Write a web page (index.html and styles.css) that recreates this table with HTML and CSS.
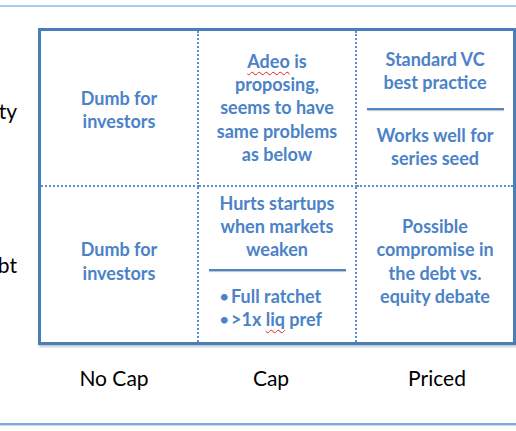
FILE: index.html
```html
<!DOCTYPE html>
<html>
<head>
<meta charset="utf-8">
<link rel="stylesheet" href="styles.css">
</head>
<body>
<div class="slide">
  <div class="topline"></div>
  <div class="main">
    <div class="rowlabels">
      <div class="rowlabel rl1"><span>Equity</span></div>
      <div class="rowlabel rl2"><span>Debt</span></div>
    </div>
    <div class="matrix-wrap">
      <div class="matrix">
        <div class="cell c1 r1"><p>Dumb for<br>investors</p></div>
        <div class="cell c2 r1"><p><span class="sp">Adeo</span> is<br>proposing,<br>seems to have<br>same problems<br>as below</p></div>
        <div class="cell c3 r1">
          <p>Standard VC<br>best practice</p>
          <hr class="sep sep-a">
          <p>Works well for<br>series seed</p>
        </div>
        <div class="cell c1 r2"><p>Dumb for<br>investors</p></div>
        <div class="cell c2 r2">
          <p>Hurts startups<br>when markets<br>weaken</p>
          <hr class="sep sep-b">
          <ul class="bullets">
            <li>Full ratchet</li>
            <li>&gt;1x <span class="sp">liq</span> pref</li>
          </ul>
        </div>
        <div class="cell c3 r2"><p>Possible<br>compromise in<br>the debt vs.<br>equity debate</p></div>
      </div>
      <div class="collabels">
        <div class="collabel cl1">No Cap</div>
        <div class="collabel cl2">Cap</div>
        <div class="collabel cl3">Priced</div>
      </div>
    </div>
  </div>
  <div class="bottomline"></div>
</div>
</body>
</html>
```

FILE: styles.css
```css
html, body {
  margin: 0;
  padding: 0;
  background: #ffffff;
}
body {
  width: 516px;
  height: 431px;
  overflow: hidden;
}
.slide {
  width: 516px;
  height: 431px;
  display: flex;
  flex-direction: column;
  font-family: Lato, "Open Sans", sans-serif;
}
.topline {
  margin-top: 5px;
  height: 2px;
  background: #a9caed;
}
.main {
  margin-top: 21px;
  display: flex;
}
.rowlabels {
  width: 38px;
  flex: none;
  display: grid;
  grid-template-columns: 38px;
  grid-template-rows: 158px 159px;
}
.rowlabel {
  min-width: 0;
  display: flex;
  justify-content: flex-end;
  align-items: center;
  padding-right: 21px;
  font-size: 21px;
  color: #000;
  white-space: nowrap;
}
.rowlabel span { flex: none; }
.rl1 { padding-top: 7px; }
.rl2 { padding-bottom: 2px; }
.matrix-wrap {
  width: 478px;
  flex: none;
}
.matrix {
  box-sizing: border-box;
  width: 478px;
  height: 317px;
  border: 3px solid #4a7ebb;
  box-shadow: 1px 2px 2px rgba(0, 0, 0, 0.22);
  display: grid;
  grid-template-columns: 158px 158px 156px;
  grid-template-rows: 156px 155px;
}
.cell {
  box-sizing: border-box;
  display: flex;
  flex-direction: column;
  justify-content: center;
  align-items: center;
  text-align: center;
  color: #4b82c8;
  font-weight: 700;
  font-size: 18px;
  line-height: 23.3px;
}
.cell p { margin: 0; }
.c1, .c2 { border-right: 2px dotted #5b8fd0; }
.r1 { border-bottom: 2px dotted #5b8fd0; }
.c1.r1 { padding-top: 4px; }
.c3.r1 { padding-top: 2px; }
.r2 { padding-bottom: 6px; }
.sp {
  text-decoration: underline wavy #e02020;
  text-decoration-thickness: 1px;
  text-underline-offset: 3px;
}
.sep {
  width: 137px;
  height: 2px;
  border: 0;
  background: #4f84c6;
  box-shadow: 0 1px 1px rgba(0, 0, 0, 0.25);
}
.sep-a { margin: 13px 0 14px; }
.sep-b { margin: 7px 0 14px; }
.bullets {
  list-style: none;
  margin: 0;
  padding: 0 0 0 20px;
  align-self: stretch;
  text-align: left;
}
.bullets li::before {
  content: "\2022";
  display: inline-block;
  width: 12px;
  font-weight: 400;
}
.collabels {
  display: grid;
  grid-template-columns: 158px 158px 162px;
  margin-top: 20px;
}
.collabel {
  text-align: center;
  font-size: 21px;
  line-height: 26px;
  color: #000;
}
.cl1 { padding-right: 6px; }
.cl2 { padding-right: 8px; }
.cl3 { padding-left: 4px; }
.bottomline {
  margin-top: auto;
  margin-bottom: 5px;
  height: 2px;
  background: #7fa7d8;
  border-bottom: 1px solid #c7dbf0;
}
```
